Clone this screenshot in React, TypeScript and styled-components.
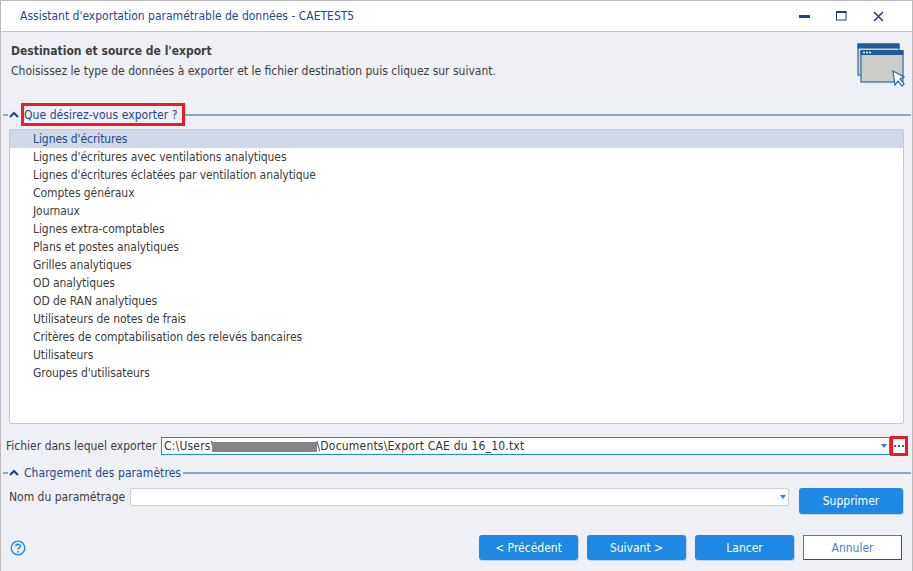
import React from "react";
import styled, { createGlobalStyle } from "styled-components";

const Global = createGlobalStyle`
  html, body { margin: 0; padding: 0; background: #eef0f5; }
  body { font-family: "DejaVu Sans Condensed", "DejaVu Sans", sans-serif; font-size: 12px; color: #3d3d3d; }
  * { box-sizing: border-box; }
`;

const Win = styled.div`
  width: 913px; height: 571px; display: flex; flex-direction: column;
  border: 1px solid #b9b9b9; border-bottom: none; background: #eef0f5; overflow: hidden;
`;
const TitleBar = styled.div`
  height: 31px; flex: none; background: #fff; border-bottom: 1px solid #c4c4c4;
  display: flex; align-items: center; padding: 0 15px 0 19px; color: #1d4a8c;
`;
const TitleText = styled.div`flex: 1;`;
const WinBtn = styled.div`
  width: 37px; height: 30px; display: flex; align-items: center; justify-content: center; color: #1d4380;
`;
const Head = styled.div`
  height: 71px; flex: none; display: flex; justify-content: space-between; padding: 11px 7px 0 10px;
`;
const HeadTitle = styled.div`font-weight: 700; color: #3f3f3f; line-height: 15px; margin-top: 1px;`;
const HeadSub = styled.div`margin-top: 5px; line-height: 15px;`;
const Section = styled.div`
  display: flex; align-items: center; color: #1d4a8c; padding-left: 2px; flex: none;
`;
const Dash = styled.div`width: 5px; height: 2px; background: #8ea7c8; margin-right: 1px; flex: none;`;
const Rule = styled.div`flex: 1; height: 2px; background: #8ea7c8; margin-right: 1px;`;
const Chevron = styled.svg`width: 10px; height: 7px; flex: none; margin-right: 2px;`;
const Boxed = styled.div<{ $red?: boolean }>`
  height: 23px; display: flex; align-items: center; white-space: nowrap;
  padding: 0 ${p => (p.$red ? "4px" : "2px")} 0 ${p => (p.$red ? "0" : "3px")};
  border: ${p => (p.$red ? "3px solid #ec1c24" : "none")};
  letter-spacing: 0.07px;
`;
const ListBox = styled.div`
  height: 295px; flex: none; margin: 3px 8px 0 8px; background: #fff;
  border: 1px solid #c8c8c8; border-radius: 2px;
`;
const Row = styled.div<{ $sel?: boolean }>`
  height: 18px; line-height: 18px; padding-left: 23px; letter-spacing: -0.08px;
  color: ${p => (p.$sel ? "#1d4a8c" : "#3d3d3d")};
  background: ${p => (p.$sel ? "#cfd9e7" : "transparent")};
`;
const FileRow = styled.div`
  display: flex; align-items: center; height: 20px; margin-top: 12px; padding-left: 5px; flex: none;
`;
const FileLabel = styled.div`width: 155px; flex: none;`;
const FileInput = styled.div`
  width: 729px; height: 18px; background: #fff; border: 1px solid #1e88e5; flex: none;
  display: flex; align-items: center; justify-content: space-between; padding: 0 2px; color: #333;
`;
const PathText = styled.div`display: flex; align-items: center; white-space: pre; letter-spacing: 0.2px;`;
const Redacted = styled.span`
  display: inline-block; width: 105px; height: 10px; margin: 2px 0 0 -3px; background: #858585; filter: blur(0.7px);
`;
const Caret = styled.div`
  width: 0; height: 0; border-left: 3.5px solid transparent; border-right: 3.5px solid transparent;
  border-top: 4px solid #1e88e5;
`;
const Dots = styled.div`
  width: 18px; height: 20px; border: 3px solid #ec1c24; background: #fff; flex: none;
  display: flex; align-items: center; justify-content: center; gap: 2px;
`;
const Dot = styled.i`width: 2px; height: 2px; background: #5f5f5f; display: block;`;
const ParamSection = styled(Section)`margin-top: 8px; height: 17px;`;
const ParamRow = styled.div`
  display: flex; align-items: flex-start; margin-top: 7px; padding-left: 8px; flex: none; height: 26px;
`;
const ParamLabel = styled.div`width: 121px; flex: none; line-height: 18px;`;
const ParamInput = styled.div`
  width: 659px; height: 18px; background: #fff; border: 1px solid #d0d0d0; border-radius: 2px;
  display: flex; align-items: center; justify-content: flex-end; padding-right: 2px; flex: none;
`;
const Btn = styled.div<{ $w?: number }>`
  width: ${p => p.$w ?? 99}px; height: 25px; border-radius: 3px; background: #1e88e5; color: #fff;
  display: flex; align-items: center; justify-content: center; flex: none;
  box-shadow: 1px 1px 0 #c9d4e2;
`;
const OutlineBtn = styled.div`
  width: 99px; height: 25px; background: #fff; color: #4d7fd0; flex: none;
  display: flex; align-items: center; justify-content: center;
  border: 1px solid #1e88e5; border-right-color: #17549c; border-bottom-color: #17549c;
`;
const SupprBtn = styled(Btn)`margin-left: 10px; width: 104px; height: 26px;`;
const Footer = styled.div`
  display: flex; align-items: center; padding: 0 10px 0 9px; gap: 9px; margin-top: 21px; flex: none;
`;
const HelpIcon = styled.svg`width: 16px; height: 16px; flex: none; margin-right: auto;`;

const items = [
  "Lignes d'écritures",
  "Lignes d'écritures avec ventilations analytiques",
  "Lignes d'écritures éclatées par ventilation analytique",
  "Comptes généraux",
  "Journaux",
  "Lignes extra-comptables",
  "Plans et postes analytiques",
  "Grilles analytiques",
  "OD analytiques",
  "OD de RAN analytiques",
  "Utilisateurs de notes de frais",
  "Critères de comptabilisation des relevés bancaires",
  "Utilisateurs",
  "Groupes d'utilisateurs",
];

const Chev = () => (
  <Chevron viewBox="0 0 10 7"><path d="M1 6 L5 2 L9 6" fill="none" stroke="#1d4380" strokeWidth="2" /></Chevron>
);

const WindowsIcon = () => (
  <svg width="48" height="44" viewBox="0 0 48 44">
    <rect x="1" y="1" width="41" height="31" fill="#d0d0cc" stroke="#2a6aa5" strokeWidth="1.2" />
    <rect x="0.5" y="0.5" width="42" height="5" rx="1" fill="#205d98" />
    <rect x="4" y="8" width="42" height="31" fill="#cbcbc8" stroke="#2a6aa5" strokeWidth="1.2" />
    <rect x="3.5" y="7" width="43" height="5" rx="1" fill="#205d98" />
    <circle cx="7" cy="9.5" r="1" fill="#fff" /><circle cx="10" cy="9.5" r="1" fill="#fff" /><circle cx="13" cy="9.5" r="1" fill="#fff" />
    <path d="M36 28 L38 42 L41 38 L45 43 L47 41 L43 36 L47 34 Z" fill="#fff" stroke="#2a6aa5" strokeWidth="1.2" />
  </svg>
);

export default function App() {
  return (
    <Win>
      <Global />
      <TitleBar>
        <TitleText>Assistant d'exportation paramétrable de données - CAETEST5</TitleText>
        <WinBtn><svg width="11" height="3"><rect width="11" height="3" fill="#1d4380" /></svg></WinBtn>
        <WinBtn><svg width="11" height="10"><rect x=".5" y=".5" width="9.5" height="8.5" fill="none" stroke="#1d4380" /><rect width="10.5" height="2" fill="#1d4380" /></svg></WinBtn>
        <WinBtn><svg width="11" height="11"><path d="M1 1 L10 10 M10 1 L1 10" stroke="#1d4380" strokeWidth="1.6" /></svg></WinBtn>
      </TitleBar>
      <Head>
        <div>
          <HeadTitle>Destination et source de l'export</HeadTitle>
          <HeadSub>Choisissez le type de données à exporter et le fichier destination puis cliquez sur suivant.</HeadSub>
        </div>
        <WindowsIcon />
      </Head>
      <Section>
        <Dash /><Chev />
        <Boxed $red>Que désirez-vous exporter ?</Boxed>
        <Rule />
      </Section>
      <ListBox>
        {items.map((t, i) => <Row key={t} $sel={i === 0}>{t}</Row>)}
      </ListBox>
      <FileRow>
        <FileLabel>Fichier dans lequel exporter</FileLabel>
        <FileInput>
          <PathText>C:\Users\<Redacted />\Documents\Export CAE du 16_10.txt</PathText>
          <Caret />
        </FileInput>
        <Dots><Dot /><Dot /><Dot /></Dots>
      </FileRow>
      <ParamSection>
        <Dash /><Chev />
        <Boxed>Chargement des paramètres</Boxed>
        <Rule />
      </ParamSection>
      <ParamRow>
        <ParamLabel>Nom du paramétrage</ParamLabel>
        <ParamInput><Caret /></ParamInput>
        <SupprBtn>Supprimer</SupprBtn>
      </ParamRow>
      <Footer>
        <HelpIcon viewBox="0 0 16 16">
          <circle cx="8" cy="8" r="6.8" fill="none" stroke="#1e88e5" strokeWidth="1.3" />
          <path d="M5.8 6.2 C5.8 3.6 10.3 3.6 10.3 6.2 C10.3 7.9 8 7.9 8 9.8" fill="none" stroke="#1e88e5" strokeWidth="1.4" />
          <rect x="7.2" y="11" width="1.6" height="1.6" fill="#1e88e5" />
        </HelpIcon>
        <Btn>&lt; Précédent</Btn>
        <Btn>Suivant &gt;</Btn>
        <Btn>Lancer</Btn>
        <OutlineBtn>Annuler</OutlineBtn>
      </Footer>
    </Win>
  );
}
